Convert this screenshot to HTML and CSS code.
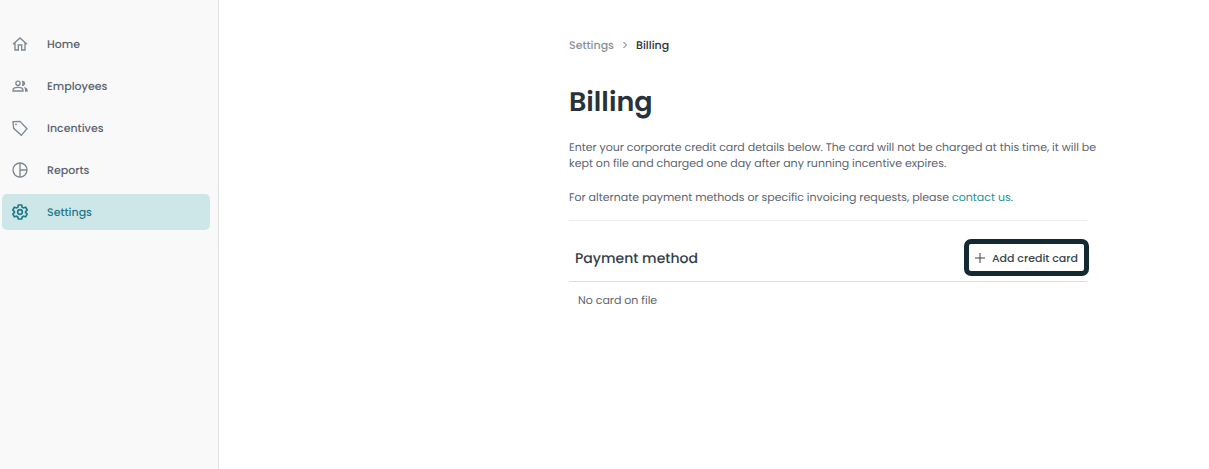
FILE: index.html
```html
<!DOCTYPE html>
<html lang="en">

<head>
  <meta charset="UTF-8">
  <meta name="viewport" content="width=device-width, initial-scale=1.0">
  <title>Billing</title>
  <link rel="stylesheet" href="styles.css">
</head>

<body>
  <div class="layout">
    <nav class="sidebar">
      <a class="nav-item" href="#home">
        <svg class="icon" viewBox="0 0 24 24"><path d="M1.5 12.5 12 3l10.500 9.500M4.500 10v11h5v-7.500h5V21h5V10" /></svg>
        Home
      </a>
      <a class="nav-item" href="#employees">
        <svg class="icon" viewBox="0 0 24 24"><circle cx="9" cy="8" r="3.200" /><path d="M1.500 19.500v-1.500c0-2.500 4-4 7.500-4s7.500 1.500 7.500 4v1.500z" /><path class="solid" d="M14.500 4.200a4 4 0 1 1 0 7.600c1.500-2 1.500-5.600 0-7.600zM17.500 13.500c3.500.6 6 2.200 6 4.500v2.500h-4V18c0-1.800-.8-3.300-2-4.500z" /></svg>
        Employees
      </a>
      <a class="nav-item" href="#incentives">
        <svg class="icon" viewBox="0 0 24 24"><path d="M1.500 2.500 12 2l10.500 11-8.500 10L2.500 12.500z" /><circle class="solid" cx="6" cy="6.500" r="1.400" /></svg>
        Incentives
      </a>
      <a class="nav-item" href="#reports">
        <svg class="icon" viewBox="0 0 24 24"><circle cx="12" cy="12" r="10.500" /><path d="M12 1.500v21M12 12h10.500" /></svg>
        Reports
      </a>
      <a class="nav-item active" href="#settings">
        <svg class="icon" viewBox="0 0 24 24"><path d="M9.500 1.500h5l.7 3.200 2 1.200 3.300-1 2.300 4.200-2.400 2.300v1.400l2.400 2.300-2.300 4.200-3.300-1-2 1.200-.7 3h-5l-.7-3-2-1.200-3.300 1-2.300-4.200 2.400-2.300v-1.400L1.200 9.100l2.300-4.200 3.300 1 2-1.200z" /><circle cx="12" cy="12" r="3.500" /></svg>
        Settings
      </a>
    </nav>

    <main class="main">
      <div class="content">
        <div class="breadcrumb">
          <a href="#settings">Settings</a>
          <svg class="chevron" viewBox="0 0 8 8"><path d="M2.500 1 5.500 4 2.500 7" /></svg>
          <span class="current">Billing</span>
        </div>

        <h1 class="title">Billing</h1>

        <div class="intro">
          <p>Enter your corporate credit card details below. The card will not be charged at this time, it will be kept on file and charged one day after any running incentive expires.</p>
          <p>For alternate payment methods or specific invoicing requests, please <a href="#contact">contact us</a>.</p>
        </div>

        <section class="payment">
          <div class="payment-header">
            <h2>Payment method</h2>
            <button class="add-card" type="button">
              <svg class="plus" viewBox="0 0 10 10"><path d="M5 0v10M0 5h10" /></svg>
              Add credit card
            </button>
          </div>
          <p class="empty">No card on file</p>
        </section>
      </div>
    </main>
  </div>
</body>

</html>
```
FILE: styles.css
```css
* {
  box-sizing: border-box;
}

body {
  margin: 0;
  font-family: Poppins, Inter, "Liberation Sans", sans-serif;
  font-size: 11px;
  line-height: 16px;
  text-rendering: geometricPrecision;
  color: #5b6470;
  background-color: #fff;
}

h1,
h2,
p {
  margin: 0;
}

a {
  text-decoration: none;
}

svg {
  flex: none;
  fill: none;
  stroke: currentColor;
}

.layout {
  display: flex;
  min-height: 100vh;
}

.sidebar {
  display: flex;
  flex-direction: column;
  flex: none;
  gap: 6px;
  width: 219px;
  padding: 26px 8px 26px 2px;
  background-color: #f9f9f9;
  border-right: 1px solid #dfe1e3;
}

.nav-item {
  display: flex;
  align-items: center;
  gap: 19px;
  height: 36px;
  padding: 0 10px;
  border-radius: 5px;
  font-weight: 500;
  color: #5b6470;
}

.icon {
  width: 16px;
  height: 16px;
  stroke-width: 2;
  color: #7d8893;
}

.icon .solid {
  fill: currentColor;
  stroke: none;
}

.active,
.active .icon {
  color: #1f7a88;
}

.active .icon {
  stroke-width: 2.5;
}

.active {
  background-color: #cde7e8;
}

.main {
  display: grid;
  grid-template-columns: 350fr minmax(0, 518px) 122fr;
  flex: 1;
  padding: 37px 0;
}

.content {
  grid-column: 2;
}

.breadcrumb {
  display: flex;
  align-items: center;
  gap: 7px;
  font-weight: 500;
  color: #5b6470;
}

.breadcrumb a {
  color: #8a929b;
}

.breadcrumb .current {
  color: #2b343d;
}

.chevron {
  width: 8px;
  height: 8px;
}

.title {
  margin-top: 32px;
  font-size: 27px;
  line-height: 36px;
  font-weight: 600;
  color: #28323b;
}

.intro {
  display: flex;
  flex-direction: column;
  gap: 18px;
  padding: 18px 0 15px;
  border-bottom: 1px solid #ececee;
}

/* text runs a little wider than the rule below it */
.intro p {
  margin-right: -16px;
}

.intro a {
  color: #1c9297;
}

.payment-header {
  display: flex;
  align-items: center;
  justify-content: space-between;
  margin-top: 18px;
  padding: 0 0 5px 6px;
  border-bottom: 1px solid #dcdde2;
}

.payment-header h2 {
  font-size: 14px;
  line-height: 20px;
  font-weight: 500;
  color: #343e47;
}

.add-card {
  display: flex;
  align-items: center;
  gap: 7px;
  height: 37px;
  margin-right: -2px;
  padding: 0 6px;
  font: inherit;
  font-weight: 500;
  color: #3b444d;
  background-color: #fff;
  border: 5px solid #142a33;
  border-radius: 7px;
}

.plus {
  width: 10px;
  height: 10px;
}

.empty {
  padding: 10px 9px;
}
```
